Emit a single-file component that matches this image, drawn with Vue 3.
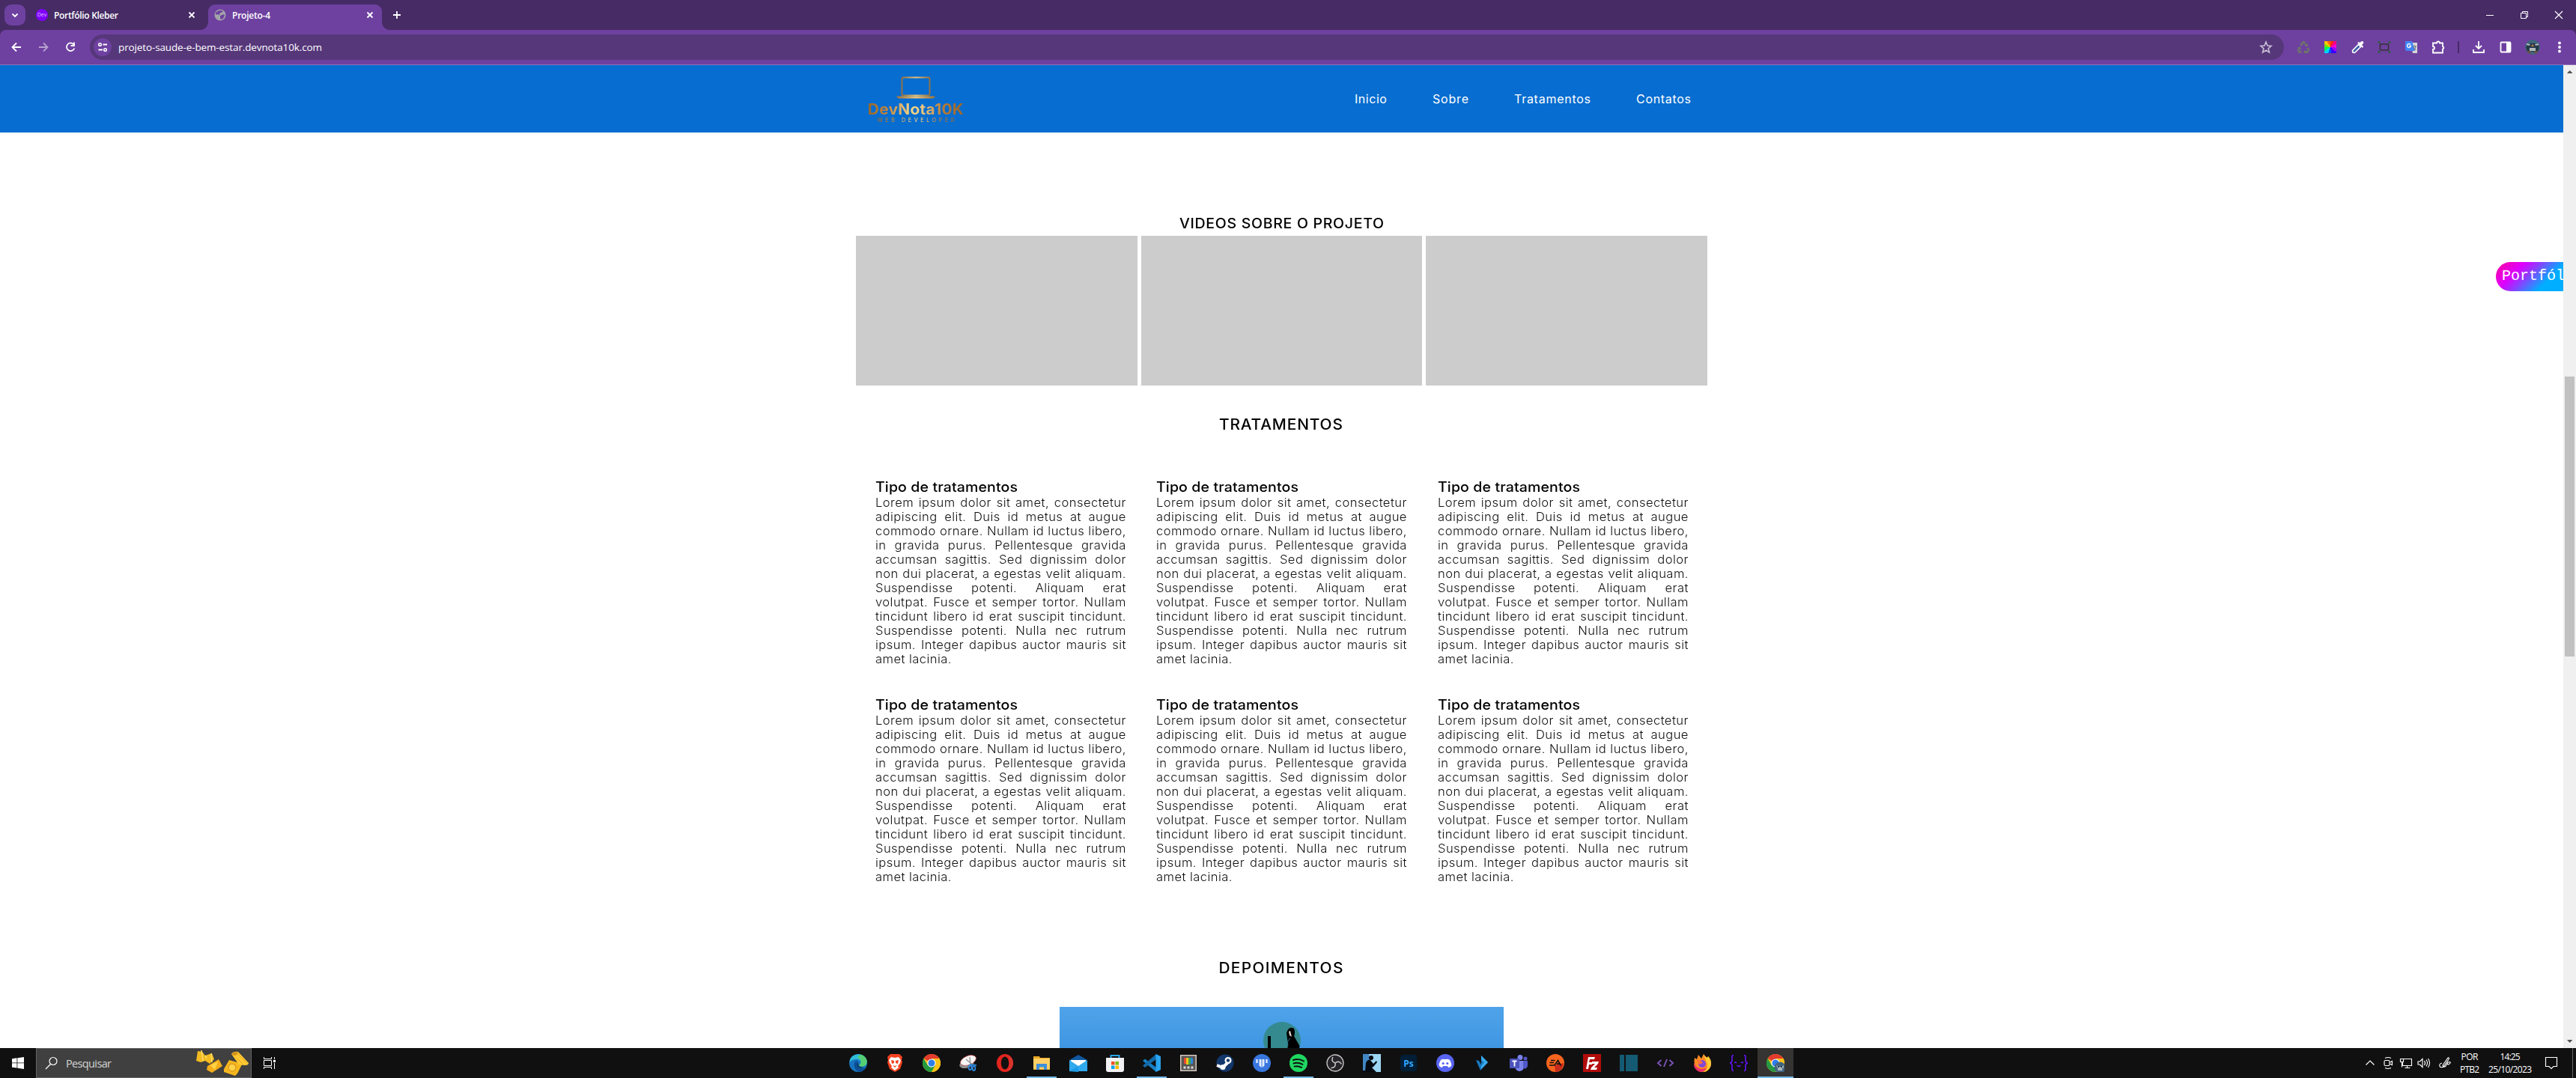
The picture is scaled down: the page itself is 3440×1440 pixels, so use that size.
<script setup>
const vFit = {
  mounted(el, { value }) {
    const n = el.textContent.length
    const rect = el.getBoundingClientRect().width
    const stretch = el.closest('.wide') ? 1.07 : 1
    const spacing = (value - rect) / (n - 1) / stretch
    el.style.letterSpacing = spacing + 'px'
    el.style.marginRight = -spacing + 'px'
  },
}
// Letter spacing of a paragraph follows its last, unjustified line
const vPara = {
  mounted(el, { value }) {
    const last = el.lastElementChild
    const spacing = (value - last.getBoundingClientRect().width) / last.textContent.length / 1.07
    el.style.letterSpacing = spacing + 'px'
  },
}

const nav = [['Inicio', 43], ['Sobre', 48], ['Tratamentos', 102], ['Contatos', 73]]
const lines = [
  'Lorem ipsum dolor sit amet, consectetur',
  'adipiscing elit. Duis id metus at augue',
  'commodo ornare. Nullam id luctus libero,',
  'in gravida purus. Pellentesque gravida',
  'accumsan sagittis. Sed dignissim dolor',
  'non dui placerat, a egestas velit aliquam.',
  'Suspendisse potenti. Aliquam erat',
  'volutpat. Fusce et semper tortor. Nullam',
  'tincidunt libero id erat suscipit tincidunt.',
  'Suspendisse potenti. Nulla nec rutrum',
  'ipsum. Integer dapibus auctor mauris sit',
  'amet lacinia.',
]
const chrome = '<circle cx="12" cy="12" r="12" fill="#fbc116"/><path d="M12 12L1.6 6A12 12 0 0 1 22.4 6H12z" fill="#e33b2e"/><path d="M1.6 6A12 12 0 0 0 12 24L17.2 15 12 12 6.8 15z" fill="#249a41"/><path d="M22.4 6H12v6l5.2 3L12 24A12 12 0 0 0 22.4 6z" fill="#fbc116"/><circle cx="12" cy="12" r="5.6" fill="#fff"/><circle cx="12" cy="12" r="4.5" fill="#2f7de9"/>'
const apps = [
  { n: 'Edge', s: '<circle cx="12" cy="12" r="12" fill="#1674c0"/><path d="M1 8C4-1 18-3 23 7c3 7-3 11-9 9 3-3 2-9-4-9-4 0-7 1-9 4z" fill="#32bcd8"/><path d="M15 0.5c9 2 11 12 6 15-3 2-7 1-8 0 5-5 2-10-2-11z" fill="#55cf72"/><path d="M9 9c-5 5-1 14 5 15 4-1 7-3 8-6-6 3-13-1-11-8z" fill="#0c4f96"/><path d="M12 10c-2 5 2 9 9 7l-3 1c-6 1-9-4-6-8z" fill="#101010"/>' },
  { n: 'Brave', s: '<path d="M6 0h12l4 4-1 4 1 3-3 9-7 4-7-4-3-9 1-3-1-4z" fill="#f4431f"/><path d="M7 4l5 1 5-1 3 4-1 4-3 4 1 2-5 4-5-4 1-2-3-4-1-4z" fill="#fff"/><path d="M7 8l4 1v3l-3 1zM17 8l-4 1v3l3 1zM9 15l3 1 3-1-3 3z" fill="#f4431f"/>' },
  { n: 'Chrome', s: chrome },
  { n: 'Snipping Tool', s: '<ellipse cx="10" cy="13" rx="10" ry="5.500" transform="rotate(-18 10 13)" fill="#8e8e8e"/><ellipse cx="12" cy="8.500" rx="11" ry="6" transform="rotate(-22 12 8.500)" fill="#f7f4f4" stroke="#c44" stroke-width=".6"/><path d="M14 4l1 10M9 7l7 6" stroke="#999" stroke-width="1.500"/><g fill="none" stroke="#2f86d8" stroke-width="1.800"><ellipse cx="14.500" cy="18" rx="2" ry="3"/><ellipse cx="19.500" cy="19" rx="1.800" ry="3"/><path d="M14 14l9 1"/></g>' },
  { n: 'Opera', s: '<path fill-rule="evenodd" d="M12 0a11 12 0 1 0 0 24 11 12 0 1 0 0-24zM12 3.500c3 0 5.200 4 5.200 8.500s-2.200 8.500-5.200 8.500-5.200-4-5.200-8.500 2.200-8.500 5.200-8.500z" fill="#e4241e"/><path d="M15 1c10 3 11 18 0 22 5-4 5-18 0-22z" fill="#d9352f"/>' },
  { n: 'Explorador', on: 1, s: '<path d="M1 3h8l1 2h13v16H1z" fill="#e9a824"/><path d="M1 6h22v14H1z" fill="#ffcf66"/><path d="M5 21v-8h14v8h-4v-3.500H9V21z" fill="#3d8fd9"/>' },
  { n: 'Mail', s: '<path d="M0 8l12-7 12 7v15H0z" fill="#1158a0"/><path d="M2 8h20v8H2z" fill="#fff"/><path d="M0 8l12 8L24 8v15H0z" fill="#31a9ed"/><path d="M0 23L12 16V24z" fill="#1b9be6"/>' },
  { n: 'Store', s: '<path d="M6.500 7V2h11v5" fill="none" stroke="#2aa5e8" stroke-width="2"/><path d="M0 5h24v16q0 3-3 3H3q-3 0-3-3z" fill="#f2f2f5"/><path d="M7 10h4.500v4.500H7z" fill="#f25022"/><path d="M12.500 10H17v4.500h-4.500z" fill="#7fba00"/><path d="M7 15.500h4.500V20H7z" fill="#00a4ef"/><path d="M12.500 15.500H17V20h-4.500z" fill="#ffb900"/>' },
  { n: 'VS Code', on: 1, s: '<path d="M0 9l3-2.500L18 18v6z" fill="#1580c8"/><path d="M18 0v7L3 18l-3-2.500z" fill="#1269a8"/><path d="M17.500 0L24 3v18l-6.500 3z" fill="#2aa4ee"/>' },
  { n: 'PowerToys', s: '<path d="M1 1h22v22H1z" fill="#d7c9c2"/><path d="M2.500 2.500h19v19h-19z" fill="#555"/><path d="M6 5h3v8H6z" fill="#e64a2e"/><path d="M9 5h3v9H9z" fill="#f4c51c"/><path d="M12 5h3v9h-3z" fill="#43a846"/><path d="M15 5h3v8h-3z" fill="#2d84dd"/><path d="M5.500 16.500h3v3h-3zM10.500 16.500h3v3h-3zM15.500 16.500h3v3h-3z" fill="#ddd"/>' },
  { n: 'Steam', s: '<circle cx="12" cy="12" r="11.500" fill="#12376c"/><path d="M1 15l8 3 7-7" fill="none" stroke="#fff" stroke-width="4"/><circle cx="16" cy="8.500" r="4.500" fill="#fff"/><circle cx="16" cy="8.500" r="2.700" fill="#12376c" stroke="#fff"/><circle cx="9" cy="17.500" r="3.600" fill="#fff"/>' },
  { n: 'Trello', s: '<circle cx="12" cy="12" r="12" fill="#3977df"/><path d="M5.500 7v5M18.500 7v5" stroke="#e4edff" stroke-width="2.300"/><path d="M8.500 7h3v11l-3-2.500zM12.500 7h3v8.500l-3 2.500z" fill="#e4edff"/>' },
  { n: 'Spotify', on: 1, s: '<circle cx="12" cy="12" r="12" fill="#1ed760"/><path d="M5 8c5-1.600 10-1 14 1.500M5.500 12.500c4-1.200 8-.8 12 1.300M6.500 16.600c3-.8 6-.6 9.500 1.300" fill="none" stroke="#101010" stroke-width="2" stroke-linecap="round"/>' },
  { n: 'OBS', s: '<circle cx="12" cy="12" r="11" fill="#262428" stroke="#c7c7c7" stroke-width="1.300"/><g fill="none" stroke="#c7c7c7" stroke-width="1.500"><path id="o" d="M12 12Q6 10 9 4"/><path d="M12 12Q6 10 9 4" transform="rotate(120 12 12)"/><path d="M12 12Q6 10 9 4" transform="rotate(240 12 12)"/></g>' },
  { n: 'Kindle', s: '<path d="M0 0h24v24H0z" fill="#4087c4"/><path d="M8 0h16v24H13z" fill="#9dd6f2"/><circle cx="11" cy="5" r="3" fill="#050a10"/><path d="M3 24l1-12q2-5 6-4l4 5 4-4 1 2-5 6-2 1 6 6zM0 22h14v2H0z" fill="#050a10"/>' },
  { n: 'Photoshop', s: '<rect x="1" y="1" width="22" height="22" rx="4" fill="#001e36"/><text x="12" y="16.500" text-anchor="middle" font-size="12" font-weight="700" font-family="Open Sans,sans-serif" fill="#31a8ff">Ps</text>' },
  { n: 'Discord', s: '<circle cx="12" cy="12" r="12" fill="#5865f2"/><path d="M6 8q3-2 4-1h4q1-1 4 1 3 5 2 8-2 2-4 2l-1-2H9l-1 2q-2 0-4-2-1-3 2-8z" fill="#fff"/><circle cx="9.200" cy="12.500" r="1.600" fill="#5865f2"/><circle cx="14.800" cy="12.500" r="1.600" fill="#5865f2"/>' },
  { n: 'Dev', s: '<path d="M4 8l4 1 3 5V2l9 9-10 11z" fill="#1877bd"/><path d="M11 2l9 9-9 9V16l4-5-4-3z" fill="#39a8ec"/>' },
  { n: 'Teams', s: '<circle cx="14" cy="4.500" r="3.500" fill="#7b83eb"/><circle cx="21" cy="6" r="2.500" fill="#5059c9"/><path d="M8 9h11v9a6 6 0 0 1-11 2z" fill="#7b83eb"/><path d="M18 9h6v7q-2 5-6 3z" fill="#5059c9"/><rect y="6" width="13" height="13" rx="1" fill="#4b53bc"/><path d="M3.500 9.500h6M6.500 9.500v7" stroke="#fff" stroke-width="1.800"/>' },
  { n: 'EA', s: '<circle cx="12" cy="12" r="12" fill="#f7641e"/><path d="M12 24l-1-9 12-3q0 10-11 12z" fill="#c82b1c"/><path d="M11.500 8.500H6M10 11.500H4.500M4 15h7l4.500-6.500 4 7M14 13.200h4" fill="none" stroke="#111" stroke-width="1.700"/>' },
  { n: 'FileZilla', s: '<path d="M0 0h24v24H0z" fill="#b30b0b"/><path d="M4 20L7 4h9l-1 3H9l-1 4h5l-1 3H8l-1 6zM12 10h9l-1 3-5 5h4l-1 3h-8l1-3 5-5h-4z" fill="#fff"/>' },
  { n: 'Janelas', s: '<path d="M0 1h6v22H0zM8 1h16v22H8z" fill="#145a73"/>' },
  { n: 'Código', s: '<path d="M6.500 8L2 12l4.500 4M17.500 8l4.500 4-4.500 4M14 7l-4 10" fill="none" stroke="#7952b3" stroke-width="2"/>' },
  { n: 'Firefox', s: '<path d="M2 5l3 2 2-6 4 5 3-6q2 4 5 5l1-2q4 4 4 10a11 11 0 0 1-22 0q-1-5 0-8z" fill="#ff8b24"/><path d="M14 0q2 4 5 5l1-2q4 4 4 10-1 9-10 11 8-6 4-13z" fill="#ffcb35"/><path d="M1 11q2 8 10 9l7-1q-3 5-9 5-9-3-8-13z" fill="#ed2d69"/><circle cx="12" cy="13" r="5" fill="#8149d8"/><path d="M5 8h5l3 4-5 2z" fill="#ff7139"/>' },
  { n: 'Chaves', s: '<path d="M5 1.500Q3 1.500 3 4v5q0 2-3 3 3 1 3 3v5q0 2.500 2 2.500M19 1.500q2 0 2 2.500v5q0 2 3 3-3 1-3 3v5q0 2.500-2 2.500M6 12q1.500-2 3 0M15 12q1.500-2 3 0M9.500 15q2.500 3 5 0" fill="none" stroke="#6415f5" stroke-width="1.600"/>' },
  { n: 'Chrome', active: 1, s: chrome + '<circle cx="18" cy="18" r="7.500" fill="#426582"/><path d="M13 15l4 2h3l3-2v3l-2 1v3h-6v-3z" fill="#a6b5bd"/><circle cx="16" cy="17" r="1" fill="#16202c"/><circle cx="20" cy="17" r="1" fill="#16202c"/>' },
]
</script>

<template>
  <div class="screen">
    <div class="tabs">
      <div class="tabsearch"><svg width="28" height="28"><path d="M10.500 12.500l3.500 3.500 3.500-3.500" class="st" /></svg></div>
      <div class="tab first">
        <span class="devico">Dev</span>
        <span class="title"><b v-fit="86">Portfólio Kleber</b></span>
        <svg width="16" height="16"><path d="M4.500 4.500l7 7M11.500 4.500l-7 7" class="st" /></svg>
      </div>
      <div class="tab current">
        <svg class="fav" width="16" height="16"><circle cx="8" cy="8" r="7.500" fill="#a3a5a8" /><path d="M2 5q4-4 8-3l2 2-4 1-1 3-3-1-2 1zM8 9l5-2 1 2-3 5-3-1z" fill="#6e41a0" /></svg>
        <span class="title"><b v-fit="51">Projeto-4</b></span>
        <svg width="16" height="16"><path d="M4.500 4.500l7 7M11.500 4.500l-7 7" class="st" /></svg>
      </div>
      <svg class="plus" width="16" height="16"><path d="M8 3v10M3 8h10" class="st" /></svg>
      <div class="win">
        <svg width="46" height="40"><path d="M18 20.500h10" stroke="#fff" /></svg>
        <svg width="46" height="40"><path d="M18.500 17.500h7v7h-7zM20.500 17v-1.500h7v7H26" stroke="#fff" fill="none" /></svg>
        <svg width="46" height="40"><path d="M18 15l10 10M28 15l-10 10" stroke="#fff" stroke-width="1.200" /></svg>
      </div>
    </div>

    <div class="toolbar">
      <svg class="nv" viewBox="0 0 36 36"><path d="M24 18H13M18 12.500L12.500 18l5.500 5.500" class="st" /></svg>
      <svg class="nv dim" viewBox="0 0 36 36"><path d="M12 18h11M18 12.500l5.500 5.500-5.500 5.500" class="st" /></svg>
      <svg class="nv" viewBox="0 0 36 36"><path d="M22.500 14.500a5.300 5.300 0 1 0 .8 5M23 11.500v4.500h-4.500" class="st" /></svg>
      <div class="omni">
        <svg class="site" width="24" height="24"><circle cx="8.500" cy="8.500" r="1.800" class="st s" /><circle cx="15.500" cy="15.500" r="1.800" class="st s" /><path d="M12.500 8.500h5.500M6.500 15.500H12" class="st" /></svg>
        <span class="url"><span v-fit="272">projeto-saude-e-bem-estar.devnota10k.com</span></span>
        <svg class="star" width="18" height="18"><path d="M9 2l2 5 5 .4-3.900 3.400L13.400 16 9 13.200 4.600 16l1.300-5.200L2 7.400 7 7z" fill="none" stroke="#c9bfd6" stroke-width="1.600" /></svg>
      </div>
      <div class="exts">
        <svg viewBox="0 0 36 36"><path d="M14.500 16l2.500-4.500h2l2.500 4M23.500 19l1.500 3-1.500 2.500h-3M15.500 24.500H12L11 22l2-3.500" fill="none" stroke="#6f736c" stroke-width="2.800" stroke-dasharray="4 .8" /><path d="M20 16.500l4 .5v-4zM21 21.500v5.500l-3-2.700zM10 18.500l4-1 1 4z" fill="#6e7a62" /></svg>
        <i><u class="wheel"></u></i>
        <svg viewBox="0 0 36 36"><path d="M12 25l-.5-2.500 8-8 3 3-8 8z" stroke="#fff" stroke-width="1.600" fill="#3e5fa8" /><path d="M18 12l7 7 1-2-2-2 2-2q1-3-2-3l-3 2-1-1z" fill="#fff" /></svg>
        <svg viewBox="0 0 36 36"><path d="M12.500 14h11v8h-11z" fill="none" stroke="#333" stroke-width="1.500" /><path d="M10.500 13v-2H13M23 11h2.500v2M25.500 23v2H23M13 25h-2.500v-2" fill="none" stroke="#285f3c" stroke-width="1.500" /></svg>
        <svg viewBox="0 0 36 36"><path d="M17 12h9v14h-6z" fill="#d6d6d6" /><path d="M10 10h9l4 13H12q-2 0-2-2z" fill="#4285f4" /><path d="M17 14.500a2.500 2.500 0 1 0 .5 2h-2.300" fill="none" stroke="#fff" stroke-width="1.300" /><path d="M20 17h5M22.500 15.500V17M24 17q0 3-3 5M21 18l3 4" stroke="#687280" fill="none" /></svg>
        <svg viewBox="0 0 36 36"><path d="M11 12.500h5a2 2 0 0 1 4 0h4v4.500a1.800 1.800 0 0 1 0 3.500v5H11v-4.500a2 2 0 0 0 0-4z" class="st" /></svg>
        <span class="div"></span>
        <svg viewBox="0 0 36 36"><path d="M18 10v9.500M14 16l4 4 4-4M11 21v4h14v-4" class="st" /></svg>
        <svg viewBox="0 0 36 36"><rect x="11.500" y="11.500" width="13" height="13" rx="1" class="st" /><path d="M19 11h6v14h-6z" fill="#fff" /></svg>
        <svg viewBox="0 0 36 36"><circle cx="18" cy="18" r="10" fill="#3f667d" /><path d="M9 18q3-6 9-5 6-1 9 5l-2 6H11z" fill="#26394b" /><path d="M10 13l5 1-1 2-4-1zM26 13l-5 1 1 2 4-1zM14 19h8v4h-8z" fill="#b1b9ba" /><path d="M18 14l2 3h-4z" fill="#c48142" /><path d="M10 23h6v3h-4zM20 23h6l-2 3h-4z" fill="#635047" /></svg>
        <svg viewBox="0 0 36 36"><g fill="#fff"><circle cx="18" cy="12.500" r="1.900" /><circle cx="18" cy="18" r="1.900" /><circle cx="18" cy="23.500" r="1.900" /></g></svg>
      </div>
    </div>

    <div class="view">
      <div class="page">
        <header>
          <div class="inner">
            <div class="logo">
              <svg width="52" height="30"><defs><linearGradient id="gold"><stop offset="0" stop-color="#9a713d" /><stop offset=".5" stop-color="#e6c47e" /><stop offset="1" stop-color="#9a713d" /></linearGradient></defs><rect x="7.500" y="1.500" width="37" height="24" rx="1.500" fill="none" stroke="url(#gold)" stroke-width="1.800" /><path d="M0 26.500h52q-1 3-4 3H4q-3 0-4-3z" fill="url(#gold)" /></svg>
              <div class="brand wide"><span v-fit="128">DevNota10K</span></div>
              <div class="sub"><span v-fit="103">WEB DEVELOPER</span></div>
            </div>
            <nav><a v-for="n in nav" :key="n[0]"><span v-fit="n[1]">{{ n[0] }}</span></a></nav>
          </div>
        </header>
        <h3 class="vh wide"><span v-fit="273">VIDEOS SOBRE O PROJETO</span></h3>
        <div class="videos"><div></div><div></div><div></div></div>
        <h2 class="th wide"><span v-fit="165">TRATAMENTOS</span></h2>
        <div class="cards">
          <article v-for="c in 6" :key="c">
            <h3 class="wide"><span v-fit="190">Tipo de tratamentos</span></h3>
            <div v-para="102" class="para"><span v-for="l in lines" :key="l">{{ l }}</span></div>
          </article>
        </div>
        <h2 class="dh wide"><span v-fit="166">DEPOIMENTOS</span></h2>
        <div class="testimonial">
          <svg width="50" height="50"><defs><clipPath id="av"><circle cx="25" cy="25" r="25" /></clipPath></defs><g clip-path="url(#av)"><path d="M0 0h50v50H0z" fill="#348a8e" /><path d="M6 19h4v31H6zM31 15q3-10 10-6 2 5 0 10l8 14 3 17H31l2-20z" fill="#000" /><path d="M34 13l2-1 2 8-3-2z" fill="#d8d4cc" /><path d="M36 22q-5 4-3 9" stroke="#2b7894" fill="none" /></g></svg>
        </div>
        <div class="pill">Portfólio</div>
      </div>
      <div class="scroll">
        <svg width="17" height="17"><path d="M5 11h7.500L8.700 7z" fill="#505050" /></svg>
        <div class="thumb"></div>
        <svg width="17" height="17"><path d="M5 6h7.500L8.700 10z" fill="#505050" /></svg>
      </div>
    </div>

    <footer>
      <div class="start"><svg width="16" height="16"><path d="M0 2.200l6.500-.9v6.200H0zM7.300 1.200L16 0v7.500H7.300zM0 8.300h6.500v6.300L0 13.700zM7.300 8.300H16V16l-8.700-1.200z" fill="#fff" /></svg></div>
      <div class="search">
        <svg width="18" height="18"><circle cx="11" cy="6.500" r="5" fill="none" stroke="#fff" stroke-width="1.200" /><path d="M7.500 10.500L1 17" stroke="#fff" stroke-width="1.200" /></svg>
        <span class="st-text"><span v-fit="61">Pesquisar</span></span>
        <svg class="pasta" width="72" height="38">
          <path d="M3 3l6 1 4 5 9-3 3 8-6 6-6-4-6 2-6-2z" fill="#f4bb20" /><path d="M8 2l2 14M13 9l2 4M21 6l1 12" stroke="#ffe06a" stroke-width="1.500" />
          <path d="M16 23l15-9 5 9-14 9-7-4z" fill="#f3ad19" /><path d="M20 22l10-5-4 11z" fill="#ffd345" />
          <path d="M38 27l7-12 18 5-2 3-5 10-3 3-15-5z" fill="#f5b71e" /><circle cx="49" cy="25" r="5" fill="#ffd24a" stroke="#dd991b" stroke-width="1.300" />
          <path d="M48 7q3-4 9-3l14 15q0 3-5 3l-8-1z" fill="#ffca32" /><path d="M48 7q5-4 9-2-1 4-6 4z" fill="#d59119" /><path d="M57 7l11 12M54 11l9 9" stroke="#e4a520" />
        </svg>
      </div>
      <div class="taskview"><svg width="16" height="16"><path d="M.5 0v2.500h10V0M.5 16v-2.500h10V16M.5 4.500h10v7H.5zM14.500 0v3M14.500 8v8" stroke="#fff" fill="none" /><path d="M13 4h3v3h-3z" fill="#fff" /></svg></div>
      <div class="apps">
        <div v-for="(a, i) in apps" :key="i" class="app" :class="{ on: a.on, active: a.active }"><svg width="24" height="24" viewBox="0 0 24 24" v-html="a.s"></svg></div>
      </div>
      <div class="tray">
        <svg class="t1" width="24" height="24"><path d="M6.500 14.500L12 9l5.500 5.500" class="ln" /></svg>
        <svg width="24" height="24"><rect x="7" y="8.500" width="7" height="7" rx="1.500" class="ln" /><path d="M14.500 11l3-1.500v5l-3-1.500M8 5.500q4-2 8 0M8 18.500q4 2 8 0" class="ln" /></svg>
        <svg width="24" height="24"><path d="M8.500 6.500h11v9H7.500v-5M10.500 18.500h7M13.500 16v2M4.500 6.500h4v4h-4zM6.500 10.500v7" class="ln" /></svg>
        <svg width="24" height="24"><path d="M4 10h2.500L10 6.500v11L6.500 14H4zM12.500 9q2 3 0 6M15 7.500q3 4.500 0 9M17.500 6q4 6 0 12" class="ln" /></svg>
        <svg class="pen" width="24" height="24"><path d="M8 12q-4 1-3 4 1 3 5 1l7-10q1-3-1-2l-7 10q1 4 4 1l3-5q4-1 3 1-2 3-4 1" class="ln" /></svg>
        <div class="lang"><div><span v-fit="23">POR</span></div><div><span v-fit="26">PTB2</span></div></div>
        <div class="clock"><div><span v-fit="27">14:25</span></div><div><span v-fit="58">25/10/2023</span></div></div>
        <svg class="note" width="24" height="24"><path d="M4.500 4.500h15v12H15L12 19.500 9 16.500H4.500z" class="ln" /></svg>
        <div class="peek"></div>
      </div>
    </footer>
  </div>
</template>

<style>
html, body { margin: 0; overflow: hidden; }
</style>

<style scoped>
* { box-sizing: border-box; }
svg { display: block; flex: none; }
span { display: inline-block; white-space: nowrap; }
.screen { width: 3440px; height: 1440px; display: flex; flex-direction: column; overflow: hidden; background: #fff; font-family: "Open Sans", "Noto Sans", sans-serif; }
.st { fill: none; stroke: #fff; stroke-width: 1.8; }
.s { stroke-width: 1.5; }
.tabs { height: 40px; background: #462b65; display: flex; color: #fff; font-size: 12px; flex: none; }
.tabsearch { width: 28px; height: 28px; margin: 6px 8px 0 6px; border-radius: 9px; background: #6e41a0; }
.tab { display: flex; align-items: center; height: 28px; margin-top: 6px; }
.tab b { display: inline-block; white-space: nowrap; font-weight: 600; }
.first { width: 236px; padding: 0 14px 0 6px; }
.title { flex: 1; margin-left: 8px; }
.devico { width: 16px; height: 16px; border-radius: 50%; background: #8000ff; color: #ddc5ff; font-size: 7px; line-height: 15px; text-align: center; }
.current { position: relative; width: 232px; height: 34px; padding: 0 8px 6px; background: #6e41a0; border-radius: 9px 9px 0 0; }
.current::before, .current::after { content: ""; position: absolute; bottom: 0; width: 10px; height: 10px; }
.current::before { left: -10px; background: radial-gradient(circle at 0 0, transparent 9.500px, #6e41a0 10px); }
.current::after { right: -10px; background: radial-gradient(circle at 100% 0, transparent 9.500px, #6e41a0 10px); }
.plus { margin: 12px 0 0 12px; }
.win { margin-left: auto; display: flex; }
.toolbar { height: 47px; flex: none; background: linear-gradient(#6e41a0 46px, #9270b8 46px); display: flex; align-items: center; padding: 0 0 1px 4px; border-radius: 8px 8px 0 0; }
.screen { background: linear-gradient(#462b65 60px, #fff 60px); }
.nv { width: 36px; height: 36px; }
.dim { opacity: .5; }
.omni { width: 2930px; height: 34px; margin-left: 8px; border-radius: 17px; background: #56377a; display: flex; align-items: center; color: #fff; font-size: 13.5px; padding: 0 15px 0 5px; }
.site { background: #6e41a0; border-radius: 50%; margin-right: 9px; }
.star { margin-left: auto; }
.exts { display: flex; align-items: center; margin-left: 8px; }
.exts > svg, .exts > i { width: 36px; height: 36px; display: block; padding: 0; }
.wheel { display: block; width: 16px; height: 16px; margin: 10px; background: conic-gradient(#ff2a00 30deg, #ff0080 30deg 60deg, #ff00d4 60deg 95deg, #a000ff 95deg 130deg, #3a00ff 130deg 170deg, #0050ff 170deg 200deg, #00d5ff 200deg 235deg, #00ff50 235deg 270deg, #78e000 270deg 300deg, #ffc400 300deg 330deg, #ff6400 330deg); }
.div { width: 2px; height: 16px; margin: 0 8px; background: #462b65; }

.view { height: 1313px; flex: none; display: flex; background: #fff; }
.page { position: relative; width: 3423px; overflow: hidden; font-family: Inter, "Open Sans", sans-serif; color: #000; }
header { height: 90px; background: #076dd0; }
.inner { width: 1137px; height: 90px; margin: 0 auto; display: flex; align-items: center; justify-content: space-between; padding: 0 22px 0 15px; }
.logo { width: 130px; align-self: flex-start; margin-top: 15px; display: flex; flex-direction: column; align-items: center; }
.logo span { color: transparent; background: linear-gradient(90deg, #986526, #c98b43 22%, #f5d589 45%, #ecc27b 60%, #b97b37 78%, #98652b); background-clip: text; }
.wide { transform: scaleX(1.07); }
.brand { font-weight: 700; font-size: 19.5px; line-height: 21px; margin-top: 4px; }
.sub { font-size: 7.2px; line-height: 9px; font-weight: 500; margin-top: -1px; }
nav { display: flex; gap: 61px; color: #fff; font-size: 16px; font-weight: 400; }
h2, h3 { margin: 0; font-weight: 450; text-align: center; }
.vh { font-size: 18.3px; line-height: 25px; margin-top: 109px; }
.videos { display: flex; gap: 5px; width: 1137px; height: 200px; margin: 4px auto 0; }
.videos div { flex: 1; background: #ccc; }
h2 { font-size: 19.5px; line-height: 30px; }
.th { margin-top: 37px; }
.cards { display: grid; grid-template-columns: repeat(3, 335px); column-gap: 40.5px; row-gap: 40px; width: 1086px; margin: 57px auto 0; }
article h3 { text-align: left; font-size: 18.3px; line-height: 23px; height: 23px; font-weight: 500; transform-origin: left; }
.para { width: 313px; transform: scaleX(1.07); transform-origin: left; font-size: 15.5px; line-height: 19px; font-weight: 300; color: #111; }
.para span { display: block; text-align: justify; text-align-last: justify; }
.para span:last-child { width: max-content; text-align-last: left; }
.dh { margin-top: 97px; }
.th span, .dh span { position: relative; left: -1px; }
.testimonial { width: 593px; height: 200px; margin: 37px auto 0; padding-top: 20px; background: linear-gradient(#4fa3ea, #3f96e2 55px); }
.testimonial svg { margin: auto; }
.pill { position: absolute; left: 3333px; top: 263px; width: 126px; height: 39px; padding-left: 8px; border-radius: 20px; background: linear-gradient(135deg, #f09 0%, #d0f 24%, #8a40ff 37%, #00aeff 57%); color: #fff; font: 20px/38px "Liberation Mono", monospace; }
.scroll { width: 17px; background: #f0f0f0; display: flex; flex-direction: column; justify-content: space-between; }
.thumb { width: 13px; height: 374px; margin: 399px 0 auto 2px; background: #c1c1c1; }

footer { height: 40px; flex: none; background: #101010; display: flex; color: #fff; }
.start { width: 48px; padding: 12px 16px; }
.search { width: 288px; height: 40px; border: 1px solid #656565; background: #404040; display: flex; align-items: center; padding: 0 2px 0 11px; }
.st-text { margin-left: 10px; font-size: 14.5px; color: #d5d5d5; }
.pasta { margin-left: auto; }
.taskview { width: 48px; padding: 12px 16px; }
.apps { display: flex; gap: 1px; margin-left: 738px; }
.app { position: relative; width: 48px; height: 40px; padding: 8px 12px; }
.app.on::after, .app.active::after { content: ""; position: absolute; bottom: 0; left: 4px; width: 40px; height: 2px; background: #76b9ed; }
.app.active { background: #353432; }
.app.active::after { left: 0; width: 48px; }
.tray { display: flex; align-items: center; margin-left: auto; height: 40px; }
.ln { fill: none; stroke: #fff; stroke-width: 1.15; }
.pen { margin-left: 4px; }
.lang, .clock { font-size: 12px; line-height: 17px; text-align: center; }
.lang { width: 28px; margin-left: 7px; }
.clock { width: 64px; margin-left: 8px; }
.note { margin-left: 11px; }
.peek { width: 1px; height: 40px; margin: 0 4px 0 16px; background: #656565; }
</style>
